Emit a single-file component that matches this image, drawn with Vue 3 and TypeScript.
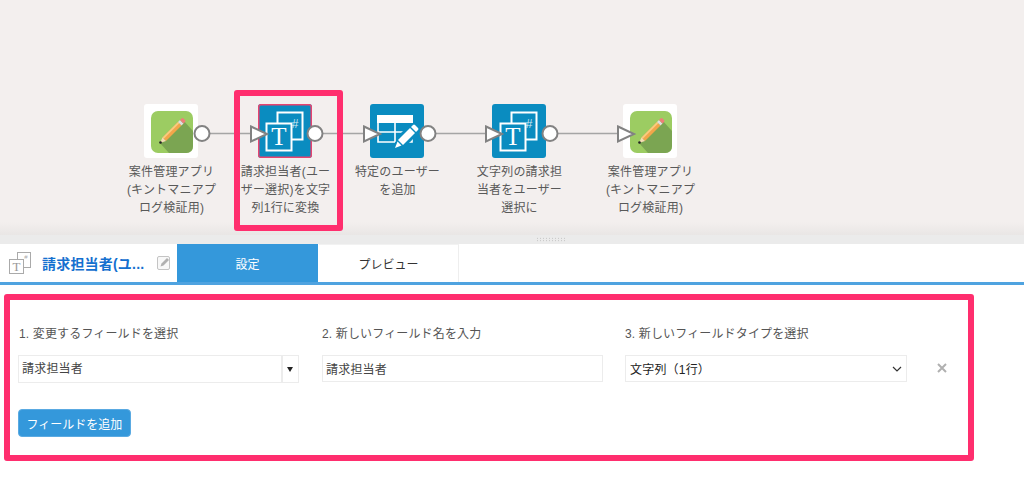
<script setup lang="ts">
type FlowNode = {
  x: number
  kind: 'app' | 'convert' | 'table'
  label: string[]
  selected?: boolean
}

const nodes: FlowNode[] = [
  { x: 144, kind: 'app', label: ['案件管理アプリ', '(キントマニアプ', 'ログ検証用)'] },
  { x: 258, kind: 'convert', label: ['請求担当者(ユー', 'ザー選択)を文字', '列1行に変換'], selected: true },
  { x: 370, kind: 'table', label: ['特定のユーザー', 'を追加'] },
  { x: 492, kind: 'convert', label: ['文字列の請求担', '当者をユーザー', '選択に'] },
  { x: 623, kind: 'app', label: ['案件管理アプリ', '(キントマニアプ', 'ログ検証用)'] }
]

const links = [
  { from: 202, to: 250 },
  { from: 315, to: 363 },
  { from: 428, to: 485 },
  { from: 550, to: 617 }
]
</script>

<template>
  <div class="page">
    <section class="canvas">
      <div
        v-for="(node, i) in nodes"
        :key="i"
        class="node"
        :style="{ left: node.x - 23 + 'px' }"
      >
        <div class="node__icon" :class="{ 'node__icon--app': node.kind === 'app', 'node__icon--selected': node.selected }">
          <svg v-if="node.kind === 'app'" width="54" height="54" viewBox="0 0 54 54">
            <rect x="7" y="7" width="42" height="42" rx="7" fill="#9ccc62" />
            <path d="M16 39 L39 16 L49 27 L49 42 Q49 49 42 49 L25 49 Z" fill="#7ba552" />
            <path d="M18.5 33.5 L34 18 L37.5 21.5 L22 37 Z" fill="#f2a64a" />
            <path d="M18.5 33.5 L34 18 L35.3 19.3 L19.8 34.8 Z" fill="#f9cb80" />
            <path d="M16 39 L18.5 33.5 L22 37 Z" fill="#f5dcb4" />
            <path d="M34 18 L36 16 L39.5 19.5 L37.5 21.5 Z" fill="#dedede" />
            <path d="M36 16 L37.5 14.5 Q38.5 13.5 39.5 14.5 L41 16 Q42 17 41 18 L39.5 19.5 Z" fill="#ee7f78" />
            <circle cx="16.5" cy="38.5" r="1.3" fill="#222" />
          </svg>
          <svg v-else-if="node.kind === 'convert'" width="54" height="54" viewBox="0 0 54 54">
            <rect x="19.5" y="8.5" width="25" height="27" fill="#0a8cc0" stroke="#fff" stroke-width="2" />
            <text x="37" y="24" class="icon-hash">#</text>
            <rect x="8.5" y="19.5" width="25" height="27" fill="#0a8cc0" stroke="#fff" stroke-width="2" />
            <text x="21" y="41" class="icon-t">T</text>
          </svg>
          <svg v-else width="54" height="54" viewBox="0 0 54 54">
            <rect x="7" y="11" width="36" height="8" fill="#fff" />
            <path d="M8 19 V38 H25 M25 19 V38 M8 28 H34 M42 33 V38 H38" fill="none" stroke="#fff" stroke-width="1.6" />
            <path d="M24 44 L27 33 L40 20 L49 29 L36 42 Z" fill="#0a8cc0" />
            <path d="M28 36 L40 24 L45 29 L33 41 Z" fill="#fff" />
            <path d="M25 44 L27.5 37.5 L31.5 41.5 Z" fill="#fff" />
            <path d="M41 23 L43 21 Q44 20 45 21 L48 24 Q49 25 48 26 L46 28 Z" fill="#fff" />
          </svg>
        </div>
        <div class="node__label">
          <div v-for="line in node.label" :key="line">{{ line }}</div>
        </div>
      </div>

      <svg class="links" width="1024" height="235" viewBox="0 0 1024 235">
        <line
          v-for="link in links"
          :key="link.from"
          :x1="link.from"
          y1="133.5"
          :x2="link.to"
          y2="133.5"
          stroke="#a5a5a5"
          stroke-width="1.5"
        />
        <circle
          v-for="link in links"
          :key="'c' + link.from"
          :cx="link.from"
          cy="133.5"
          r="7.5"
          fill="#fff"
          stroke="#828282"
          stroke-width="2"
        />
        <path
          v-for="link in links"
          :key="'t' + link.to"
          :d="`M${link.to + 1} 126.5 L${link.to + 17} 134 L${link.to + 1} 141.5 Z`"
          fill="#fff"
          stroke="#828282"
          stroke-width="2"
        />
      </svg>

      <div class="highlight highlight--node"></div>
    </section>

    <div class="splitter"><span class="splitter__grip"></span></div>

    <header class="head">
      <div class="head__title">
        <svg class="head__icon" width="24" height="26" viewBox="0 0 24 26">
          <rect x="9.5" y="2.5" width="13" height="15" fill="#fff" stroke="#aaa" />
          <text x="18" y="9" class="head__hash">#</text>
          <rect x="1.5" y="9.5" width="14" height="14" fill="#fff" stroke="#aaa" />
          <text x="8.5" y="21" class="head__t">T</text>
        </svg>
        <span class="head__name">請求担当者(ユ...</span>
        <svg class="head__edit" width="14" height="14" viewBox="0 0 14 14">
          <rect x="0.5" y="0.5" width="12" height="13" rx="1.5" fill="#f8f8f8" stroke="#c4c4c4" />
          <path d="M3.5 10.5 L4.5 7.5 L10 2 L12 4 L6.5 9.5 Z" fill="#b0b0b0" />
        </svg>
      </div>
      <div class="tab tab--active">設定</div>
      <div class="tab">プレビュー</div>
    </header>

    <section class="panel">
      <div class="fields">
        <div class="field field--first">
          <label class="field__label">1. 変更するフィールドを選択</label>
          <div class="combo">
            <span class="combo__value">請求担当者</span>
            <span class="combo__arrow"></span>
          </div>
        </div>
        <div class="field field--second">
          <label class="field__label">2. 新しいフィールド名を入力</label>
          <input class="text-input" type="text" value="請求担当者" />
        </div>
        <div class="field field--third">
          <label class="field__label">3. 新しいフィールドタイプを選択</label>
          <div class="select">
            <span>文字列（1行）</span>
            <svg width="10" height="6" viewBox="0 0 10 6">
              <path d="M1 1 L5 5 L9 1" fill="none" stroke="#333" stroke-width="1.2" />
            </svg>
          </div>
        </div>
        <svg class="remove" width="10" height="10" viewBox="0 0 10 10">
          <path d="M1 1 L9 9 M9 1 L1 9" stroke="#b0b0b0" stroke-width="2" />
        </svg>
      </div>
      <button class="add" type="button">フィールドを追加</button>
    </section>

    <div class="highlight highlight--panel"></div>
  </div>
</template>

<style scoped>
.page {
  position: relative;
  width: 1024px;
  height: 480px;
  overflow: hidden;
  background: #fff;
  font-family: "Liberation Sans", "Noto Sans CJK JP", sans-serif;
  color: #555;
}

.canvas {
  position: relative;
  height: 235px;
  background: linear-gradient(to bottom, #f3efee 0, #f3efee 222px, #e9e6e5 235px);
}

.node {
  position: absolute;
  top: 104px;
  width: 100px;
  display: flex;
  flex-direction: column;
  align-items: center;
}

.node__icon {
  width: 54px;
  height: 54px;
  border-radius: 3px;
  background: #0a8cc0;
  box-sizing: border-box;
}

.node__icon--app {
  background: #fff;
}

.node__icon--selected {
  box-shadow: inset 0 0 0 1.5px #e8436f;
}

.node__label {
  margin: 5px 0 0 1px;
  width: 100px;
  text-align: center;
  font-size: 12px;
  line-height: 18px;
  letter-spacing: 0.2px;
  color: #595959;
  white-space: nowrap;
}

.icon-t {
  font-family: "Liberation Serif", serif;
  font-size: 25px;
  fill: #fff;
  text-anchor: middle;
}

.icon-hash {
  font-family: "Liberation Sans", sans-serif;
  font-size: 12px;
  fill: #d5e9f3;
  text-anchor: middle;
}

.links {
  position: absolute;
  left: 0;
  top: 0;
  pointer-events: none;
}

.highlight {
  position: absolute;
  box-sizing: border-box;
  border: 6px solid #ff2e6e;
  border-radius: 3px;
}

.highlight--node {
  left: 234px;
  top: 90px;
  width: 109px;
  height: 141px;
}

.highlight--panel {
  left: 4px;
  top: 294px;
  width: 970px;
  height: 167px;
}

.splitter {
  height: 9px;
  box-sizing: border-box;
  padding-left: 536px;
  background: #ebebeb;
  display: flex;
  align-items: center;
}

.splitter__grip {
  width: 30px;
  height: 5px;
  background-image: radial-gradient(#bdbdbd 1px, transparent 1px);
  background-size: 3px 2.5px;
}

.head {
  display: flex;
  height: 38px;
  border-bottom: 3px solid #4fa3e0;
}

.head__title {
  width: 177px;
  flex: none;
  display: flex;
  align-items: center;
  box-sizing: border-box;
  padding-left: 8px;
}

.head__icon {
  flex: none;
}

.head__hash {
  font-family: "Liberation Sans", sans-serif;
  font-size: 6px;
  fill: #aaa;
  text-anchor: middle;
}

.head__t {
  font-family: "Liberation Serif", serif;
  font-size: 13px;
  fill: #999;
  text-anchor: middle;
}

.head__name {
  margin-left: 10px;
  font-size: 14px;
  font-weight: 700;
  letter-spacing: 0.2px;
  color: #1470cf;
  white-space: nowrap;
  width: 115px;
  flex: none;
}

.head__edit {
  flex: none;
}

.tab {
  width: 140px;
  box-sizing: border-box;
  flex: none;
  display: flex;
  align-items: center;
  justify-content: center;
  font-size: 12px;
  color: #333;
  background: #fff;
  border-right: 1px solid #eee;
  border-top: 1px solid #f2f2f2;
}

.tab--active {
  width: 141px;
  background: #3498db;
  color: #fff;
  border: 0;
  margin-right: 1px;
}

.panel {
  padding: 41px 0 0 18px;
}

.fields {
  display: flex;
  align-items: flex-start;
}

.field__label {
  display: block;
  font-size: 12px;
  line-height: 16px;
  letter-spacing: 0.15px;
  color: #555;
  margin-bottom: 13px;
}

.field--first {
  width: 281px;
  margin-right: 23px;
}

.field--first .field__label {
  padding-left: 1px;
}

.field--second {
  width: 281px;
  margin-right: 22px;
}

.field--third {
  width: 282px;
}

.combo {
  display: flex;
  height: 28px;
  box-sizing: border-box;
  border: 1px solid #ececec;
  background: #fff;
  margin-top: 1px;
}

.combo__value {
  flex: 1;
  border-right: 2px solid #ececec;
  padding-left: 3px;
  font-size: 12px;
  line-height: 26px;
  letter-spacing: 0.2px;
  color: #444;
}

.combo__arrow {
  width: 15px;
  position: relative;
}

.combo__arrow::after {
  content: "";
  position: absolute;
  left: 4px;
  top: 11px;
  border-left: 3.5px solid transparent;
  border-right: 3.5px solid transparent;
  border-top: 5px solid #222;
}

.text-input {
  display: block;
  width: 100%;
  height: 27px;
  box-sizing: border-box;
  border: 1px solid #ececec;
  padding: 0 3px;
  font-family: inherit;
  font-size: 12px;
  letter-spacing: 0.2px;
  color: #444;
  outline: none;
}

.select {
  display: flex;
  align-items: center;
  justify-content: space-between;
  height: 27px;
  box-sizing: border-box;
  border: 1px solid #ececec;
  padding: 0 4px;
  font-size: 12px;
  letter-spacing: 0.2px;
  color: #222;
}

.remove {
  flex: none;
  margin: 37px 0 0 30px;
}

.add {
  display: block;
  margin-top: 26px;
  width: 113px;
  height: 28px;
  padding: 0;
  border: 1px solid #5aaae2;
  border-radius: 4px;
  background: #3498db;
  color: #fff;
  font-family: inherit;
  font-size: 12px;
}
</style>

<style>
html,
body {
  margin: 0;
  background: #fff;
}
</style>
